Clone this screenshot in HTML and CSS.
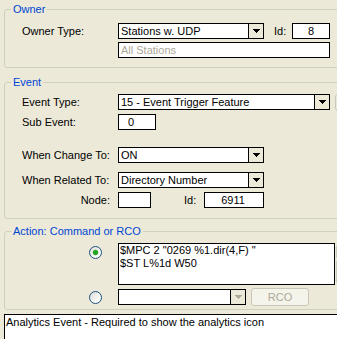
FILE: index.html
```html
<!DOCTYPE html>
<html lang="en">
<head>
    <meta charset="UTF-8">
    <title>Event Properties</title>
    <link rel="stylesheet" href="styles.css">
</head>
<body>
    <div class="dialog">
        <fieldset class="group group-owner">
            <legend>Owner</legend>
            <div class="group-body owner-body">
                <div class="row">
                    <span class="lbl">Owner Type:</span>
                    <div class="combo combo-short">
                        <span class="val">Stations w. UDP</span>
                        <span class="drop"><svg width="7" height="4" viewBox="0 0 7 4"><path d="M0 0H7V1H6V2H5V3H4V4H3V3H2V2H1V1H0Z"/></svg></span>
                    </div>
                    <span class="id-lbl">Id:</span>
                    <div class="field field-id">8</div>
                </div>
                <div class="row row-gap3">
                    <span class="lbl"></span>
                    <div class="field field-wide muted">All Stations</div>
                </div>
            </div>
        </fieldset>

        <fieldset class="group group-event">
            <legend>Event</legend>
            <div class="group-body event-body">
                <div class="row">
                    <span class="lbl">Event Type:</span>
                    <div class="combo combo-wide">
                        <span class="val">15 - Event Trigger Feature</span>
                        <span class="drop"><svg width="7" height="4" viewBox="0 0 7 4"><path d="M0 0H7V1H6V2H5V3H4V4H3V3H2V2H1V1H0Z"/></svg></span>
                    </div>
                    <span class="side-btn"></span>
                </div>
                <div class="row row-gap4">
                    <span class="lbl">Sub Event:</span>
                    <div class="field field-sub">0</div>
                </div>
                <div class="row row-gap17">
                    <span class="lbl">When Change To:</span>
                    <div class="combo combo-short">
                        <span class="val">ON</span>
                        <span class="drop"><svg width="7" height="4" viewBox="0 0 7 4"><path d="M0 0H7V1H6V2H5V3H4V4H3V3H2V2H1V1H0Z"/></svg></span>
                    </div>
                </div>
                <div class="row row-gap9">
                    <span class="lbl">When Related To:</span>
                    <div class="combo combo-short">
                        <span class="val">Directory Number</span>
                        <span class="drop"><svg width="7" height="4" viewBox="0 0 7 4"><path d="M0 0H7V1H6V2H5V3H4V4H3V3H2V2H1V1H0Z"/></svg></span>
                    </div>
                </div>
                <div class="row row-gap4">
                    <span class="lbl lbl-right">Node:</span>
                    <div class="field field-node"></div>
                    <span class="id-lbl id-lbl-node">Id:</span>
                    <div class="field field-num">6911</div>
                </div>
            </div>
        </fieldset>

        <fieldset class="group group-action">
            <legend>Action: Command or RCO</legend>
            <div class="group-body action-body">
                <div class="row row-tall">
                    <span class="radio-cell"><span class="radio radio-on"></span></span>
                    <div class="cmd-box">$MPC 2 "0269 %1.dir(4,F) "
$ST L%1d W50</div>
                    <div class="spin">
                        <span class="spin-btn spin-up"></span>
                        <span class="spin-btn spin-down"></span>
                    </div>
                </div>
                <div class="row row-btn">
                    <span class="radio-cell"><span class="radio"></span></span>
                    <div class="combo combo-rco">
                        <span class="val"></span>
                        <span class="drop drop-off"><svg width="7" height="4" viewBox="0 0 7 4"><path d="M0 0H7V1H6V2H5V3H4V4H3V3H2V2H1V1H0Z"/></svg></span>
                    </div>
                    <button class="btn-rco" disabled>RCO</button>
                </div>
            </div>
        </fieldset>

        <div class="notes">Analytics Event - Required to show the analytics icon</div>
    </div>
</body>
</html>
```

FILE: styles.css
```css
* {
    box-sizing: border-box;
}

html,
body {
    margin: 0;
    padding: 0;
}

body {
    background: #ECE9D8;
    font-family: "Liberation Sans", Arial, sans-serif;
    font-size: 11px;
    color: #000;
    width: 337px;
    height: 339px;
    overflow: hidden;
}

.dialog {
    width: 337px;
    overflow: hidden;
}

/* group boxes */
.group {
    margin: 0 -20px 0 4px;
    min-width: 0;
    padding: 0;
    border: 1px solid #D0D0BF;
    border-radius: 3px;
}

.group legend {
    color: #0046D5;
    line-height: 13px;
    padding: 0 2px;
    margin-left: 6px;
}

.group-owner {
    margin-top: 3px;
}

.group-event {
    margin-top: 8px;
}

.group-action {
    margin-top: 6px;
}

.group-body {
    padding-left: 17px;
}

.owner-body {
    padding-top: 7px;
    padding-bottom: 9px;
}

.event-body {
    padding-top: 5px;
    padding-bottom: 10px;
}

.action-body {
    padding-top: 5px;
    padding-bottom: 3px;
}

/* rows */
.row {
    display: flex;
    align-items: center;
    height: 16px;
}

.row-gap3 { margin-top: 3px; }
.row-gap4 { margin-top: 4px; }
.row-gap9 { margin-top: 9px; }
.row-gap17 { margin-top: 17px; }

.row-tall {
    height: 42px;
    align-items: flex-start;
}

.row-btn {
    height: 18px;
    margin-top: 3px;
}

.lbl {
    width: 96px;
    flex: none;
    white-space: nowrap;
}

.lbl-right {
    text-align: right;
    padding-right: 8px;
}

.id-lbl {
    margin-left: 10px;
    width: 18px;
    flex: none;
}

.id-lbl-node {
    margin-left: 33px;
    width: 20px;
}

/* inputs */
.field,
.combo {
    height: 16px;
    border: 1px solid #000;
    background: #fff;
    line-height: 14px;
    white-space: nowrap;
    overflow: hidden;
    flex: none;
}

.field {
    padding-left: 2px;
}

.field-id {
    width: 38px;
    text-align: center;
    padding-left: 0;
}

.field-wide {
    width: 212px;
}

.field-sub {
    width: 38px;
    padding-left: 9px;
}

.field-node {
    width: 33px;
}

.field-num {
    width: 60px;
    text-align: center;
    padding: 0 2px 0 0;
}

.muted {
    color: #ACA899;
}

.combo {
    display: flex;
}

.combo .val {
    flex: 1;
    padding-left: 2px;
    overflow: hidden;
}

.combo .drop {
    width: 15px;
    flex: none;
    border-left: 1px solid #000;
    background: #ECE9D8;
    display: flex;
    align-items: center;
    justify-content: center;
}

.drop svg {
    display: block;
    fill: #000;
}

.drop-off svg {
    fill: #ACA899;
}

.combo-short {
    width: 146px;
}

.combo-wide {
    width: 212px;
}

.combo-rco {
    width: 128px;
}

.side-btn {
    margin-left: 5px;
    width: 20px;
    height: 17px;
    border: 1px solid #C9C7BA;
    border-radius: 3px;
    flex: none;
}

/* action box */
.radio-cell {
    width: 96px;
    flex: none;
    padding-left: 67px;
    display: flex;
    align-items: center;
}

.row-tall .radio-cell {
    height: 19px;
}

.radio {
    width: 13px;
    height: 13px;
    border-radius: 50%;
    border: 1px solid #1C5180;
    background: linear-gradient(135deg, #DCDCD7 0%, #F5F5F2 60%, #fff 100%);
}

.radio-on {
    background:
        radial-gradient(circle at 50% 50%, #21A121 0, #21A121 2px, #5BC85B 2.6px, transparent 3.2px),
        linear-gradient(135deg, #DCDCD7 0%, #F5F5F2 60%, #fff 100%);
}

.cmd-box {
    width: 217px;
    height: 42px;
    flex: none;
    border: 1px solid #000;
    background: #fff;
    padding: 0 0 0 1px;
    line-height: 13px;
    white-space: pre;
    overflow: hidden;
}

.spin {
    margin-left: 1px;
    display: flex;
    flex-direction: column;
    gap: 1px;
    padding-top: 2px;
    flex: none;
}

.spin-btn {
    width: 12px;
    border: 1px solid #C9C7BA;
    border-radius: 2px;
}

.spin-up {
    height: 14px;
}

.spin-down {
    height: 24px;
}

.btn-rco {
    margin-left: 5px;
    width: 58px;
    height: 18px;
    padding: 0;
    border: 1px solid #C9C7BA;
    border-radius: 3px;
    background: #F5F4EA;
    color: #ACA899;
    font-family: inherit;
    font-size: 11px;
    line-height: 16px;
}

/* notes */
.notes {
    margin: 4px 0 0 4px;
    width: 350px;
    height: 40px;
    border: 1px solid #000;
    background: #fff;
    padding: 1px 0 0 1px;
    line-height: 13px;
}
```
